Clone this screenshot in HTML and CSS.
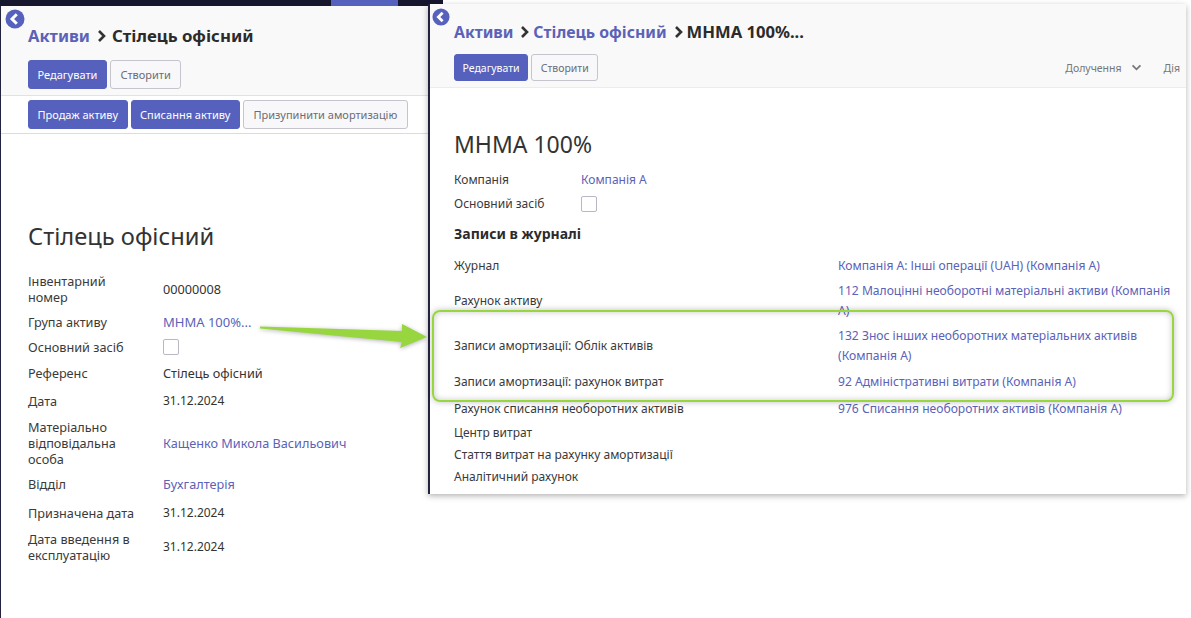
FILE: index.html
```html
<!DOCTYPE html>
<html lang="uk">
<head>
<meta charset="utf-8">
<title>Активи</title>
<link rel="stylesheet" href="styles.css">
</head>
<body>
<div class="canvas">
  <section class="win-left">
    <div class="topbar"><span class="toptab"></span></div>
    <header class="cp cp-left">
      <svg class="back" viewBox="0 0 20 20"><circle cx="10" cy="10" r="9.5" fill="#5661bd"/><path d="M11.8 5.2 7 10l4.8 4.8" fill="none" stroke="#fff" stroke-width="3"/></svg>
      <h1 class="crumbs"><a>Активи</a><svg class="sep" viewBox="0 0 10 14"><path d="M2 2l5 5-5 5" fill="none" stroke="#333" stroke-width="2.6"/></svg><span class="last">Стілець офісний</span></h1>
      <div class="btns"><button class="btn primary">Редагувати</button><button class="btn">Створити</button></div>
    </header>
    <div class="statusbar">
      <button class="btn primary">Продаж активу</button><button class="btn primary">Списання активу</button><button class="btn">Призупинити амортизацію</button>
    </div>
    <main class="sheet-left">
      <h2 class="title">Стілець офісний</h2>
      <div class="form form-left">
        <div class="lab r38">Інвентарний номер</div><div class="val">00000008</div>
        <div class="lab r28">Група активу</div><div class="val"><a class="wide">МНМА 100%...</a></div>
        <div class="lab r22">Основний засіб</div><div class="val"><i class="check"></i></div>
        <div class="lab r30">Референс</div><div class="val">Стілець офісний</div>
        <div class="lab r26">Дата</div><div class="val date">31.12.2024</div>
        <div class="lab r58">Матеріально відповідальна особа</div><div class="val"><a>Кащенко Микола Васильович</a></div>
        <div class="lab r24">Відділ</div><div class="val"><a>Бухгалтерія</a></div>
        <div class="lab r33">Призначена дата</div><div class="val date">31.12.2024</div>
        <div class="lab r36">Дата введення в експлуатацію</div><div class="val date">31.12.2024</div>
      </div>
    </main>
  </section>

  <section class="win-right">
    <header class="cp cp-right">
      <svg class="back" viewBox="0 0 20 20"><circle cx="10" cy="10" r="9.5" fill="#5661bd"/><path d="M11.8 5.2 7 10l4.8 4.8" fill="none" stroke="#fff" stroke-width="3"/></svg>
      <h1 class="crumbs small"><a>Активи</a><svg class="sep" viewBox="0 0 10 14"><path d="M2 2l5 5-5 5" fill="none" stroke="#333" stroke-width="2.6"/></svg><a>Стілець офісний</a><svg class="sep" viewBox="0 0 10 14"><path d="M2 2l5 5-5 5" fill="none" stroke="#333" stroke-width="2.6"/></svg><span class="last">МНМА 100%...</span></h1>
      <div class="cp-row">
        <div class="btns"><button class="btn primary">Редагувати</button><button class="btn">Створити</button></div>
        <div class="menus"><span class="menu">Долучення<svg class="chev" viewBox="0 0 12 8"><path d="M1.5 1.5 6 6l4.5-4.5" fill="none" stroke="#777" stroke-width="2"/></svg></span><span class="menu">Дія</span></div>
      </div>
    </header>
    <main class="sheet-right">
      <h2 class="title">МНМА 100%</h2>
      <div class="form form-top">
        <div class="lab">Компанія</div><div class="val"><a>Компанія А</a></div>
        <div class="lab">Основний засіб</div><div class="val"><i class="check"></i></div>
      </div>
      <h3 class="subtitle">Записи в журналі</h3>
      <div class="form form-journal">
        <div class="lab j24">Журнал</div><div class="val"><a>Компанія А: Інші операції (UAH) (Компанія А)</a></div>
        <div class="lab j46">Рахунок активу</div><div class="val"><a>112 Малоцінні необоротні матеріальні активи (Компанія А)</a></div>
        <div class="lab j44">Записи амортизації: Облік активів</div><div class="val"><a>132 Знос інших необоротних матеріальних активів (Компанія А)</a></div>
        <div class="lab j28">Записи амортизації: рахунок витрат</div><div class="val"><a>92 Адміністративні витрати (Компанія А)</a></div>
        <div class="lab j26">Рахунок списання необоротних активів</div><div class="val"><a>976 Списання необоротних активів (Компанія А)</a></div>
        <div class="lab j22">Центр витрат</div><div class="val"></div>
        <div class="lab j22">Стаття витрат на рахунку амортизації</div><div class="val"></div>
        <div class="lab j22">Аналітичний рахунок</div><div class="val"></div>
      </div>
    </main>
  </section>

  <div class="highlight"></div>
  <svg class="arrow" viewBox="0 0 170 30"><path d="M1 6.5 143 11 143 4 168 17 141 28 143 22 1 8.5Z" fill="#97d63e"/></svg>
</div>
</body>
</html>
```
FILE: styles.css
```css
* { box-sizing: border-box; }
html, body { margin: 0; padding: 0; }
body { background: #fff; color: #333; font-family: "Noto Sans", "Open Sans", sans-serif; font-size: 12px; line-height: 16px; overflow: hidden; }
.canvas { position: relative; width: 1191px; height: 618px; overflow: hidden; }
a { color: #5b62b8; text-decoration: none; }

.win-left { position: absolute; left: 0; top: 0; width: 428px; height: 618px; border-left: 1px solid #23233f; }
.topbar { width: 443px; height: 6px; background: #16162e; position: relative; margin-left: -1px; }
.toptab { position: absolute; left: 331px; top: 0; width: 67px; height: 6px; background: #5661bd; }

.cp { position: relative; background: #f9f9f9; }
.cp-left { height: 90px; padding: 19px 0 0 27px; border-bottom: 1px solid #e2e2e2; }
.back { position: absolute; width: 20px; height: 20px; }
.cp-left .back { left: 4px; top: 3px; }
.cp-right .back { left: 2px; top: 4px; width: 18px; height: 18px; }
.crumbs { margin: 0; height: 22px; display: flex; align-items: center; font-size: 16.5px; line-height: 22px; font-weight: 700; color: #2b2b2b; white-space: nowrap; }
.crumbs .sep { width: 10px; height: 14px; margin: 0 5px 0 7px; }
.crumbs .last { font-size: 16.8px; }
.crumbs.small { font-size: 15.8px; }
.crumbs.small .sep { margin: 0 3px 0 7px; }
.crumbs.small .last { font-size: 16.6px; }
.btns { display: flex; gap: 3px; margin-top: 13px; }
.btn { height: 29px; padding: 0 9.5px; border: 1px solid #c5c5ce; border-radius: 3px; background: #f8f8fa; color: #6c6c74; font: 11px/16px "Noto Sans", "Open Sans", sans-serif; white-space: nowrap; }
.btn.primary { padding: 0 8.5px; background: #5661bd; border-color: #5661bd; color: #fff; }

.statusbar { height: 38px; padding: 4px 0 0 27px; display: flex; gap: 3px; border-bottom: 1px solid #dcdcdc; }
.sheet-left { padding: 87px 0 0 27px; font-size: 12.7px; }
.title { margin: 0; font-size: 23.7px; line-height: 30px; font-weight: 400; color: #333; }
.sheet-right .title { font-size: 23px; }

.form { display: grid; align-items: center; }
.form-left { grid-template-columns: 135px 1fr; margin-top: 19px; width: 380px; }
.form-left .lab { padding-right: 15px; display: flex; align-items: center; }
.date { font-size: 12px; }
.wide { font-size: 13px; }
.lab { color: #3a3a3a; }
.r22 { height: 22px; }
.r24 { height: 24px; }
.r26 { height: 26px; }
.r28 { height: 28px; }
.r30 { height: 30px; }
.r33 { height: 33px; }
.r36 { height: 36px; }
.r38 { height: 38px; }
.r58 { height: 58px; }
.check { display: block; width: 16px; height: 16px; border: 1px solid #b8b8c4; border-radius: 2px; background: #fff; }

.win-right { position: absolute; left: 428px; top: 4px; width: 758px; height: 490px; background: #fff; border-left: 2px solid #23233f; box-shadow: 0 2px 6px rgba(0,0,0,.3); }
.cp-right { height: 84px; padding: 17px 0 0 24px; border-bottom: 1px solid #ececec; }
.cp-right .btns { margin-top: 0; }
.cp-row { display: flex; justify-content: space-between; align-items: center; margin-top: 11px; }
.cp-right .btn { height: 27px; padding: 0 8.5px; font-size: 10.5px; }
.cp-right .btn.primary { padding: 0 7.5px; }
.menus { display: flex; gap: 22px; padding-right: 6px; color: #777; font-size: 10.5px; }
.menu { display: flex; align-items: center; }
.chev { width: 11px; height: 7px; margin-left: 9px; }
.sheet-right { padding: 41px 0 0 24px; }
.form-top { grid-template-columns: 127px 1fr; margin-top: 9px; }
.form-top > * { min-height: 24px; display: flex; align-items: center; }
.subtitle { margin: 8px 0 0; font-size: 14px; line-height: 20px; font-weight: 700; color: #2b2b2b; }
.form-journal { grid-template-columns: 384px 336px; margin-top: 10px; font-size: 12.1px; }
.form-journal .val { line-height: 20px; }
.form-journal .lab { display: flex; align-items: center; font-size: 12px; }
.j22 { height: 22px; }
.j24 { height: 24px; }
.j26 { height: 26px; }
.j28 { height: 28px; }
.j44 { height: 44px; }
.j46 { height: 46px; }

.highlight { position: absolute; left: 432px; top: 310px; width: 742px; height: 92px; border: 2px solid #97d63e; border-radius: 8px; box-shadow: 0 0 6px rgba(0,0,0,.25), inset 0 0 6px rgba(0,0,0,.22); }
.arrow { position: absolute; left: 259px; top: 320px; width: 170px; height: 30px; filter: drop-shadow(0 1px 2px rgba(0,0,0,.3)); }
```
